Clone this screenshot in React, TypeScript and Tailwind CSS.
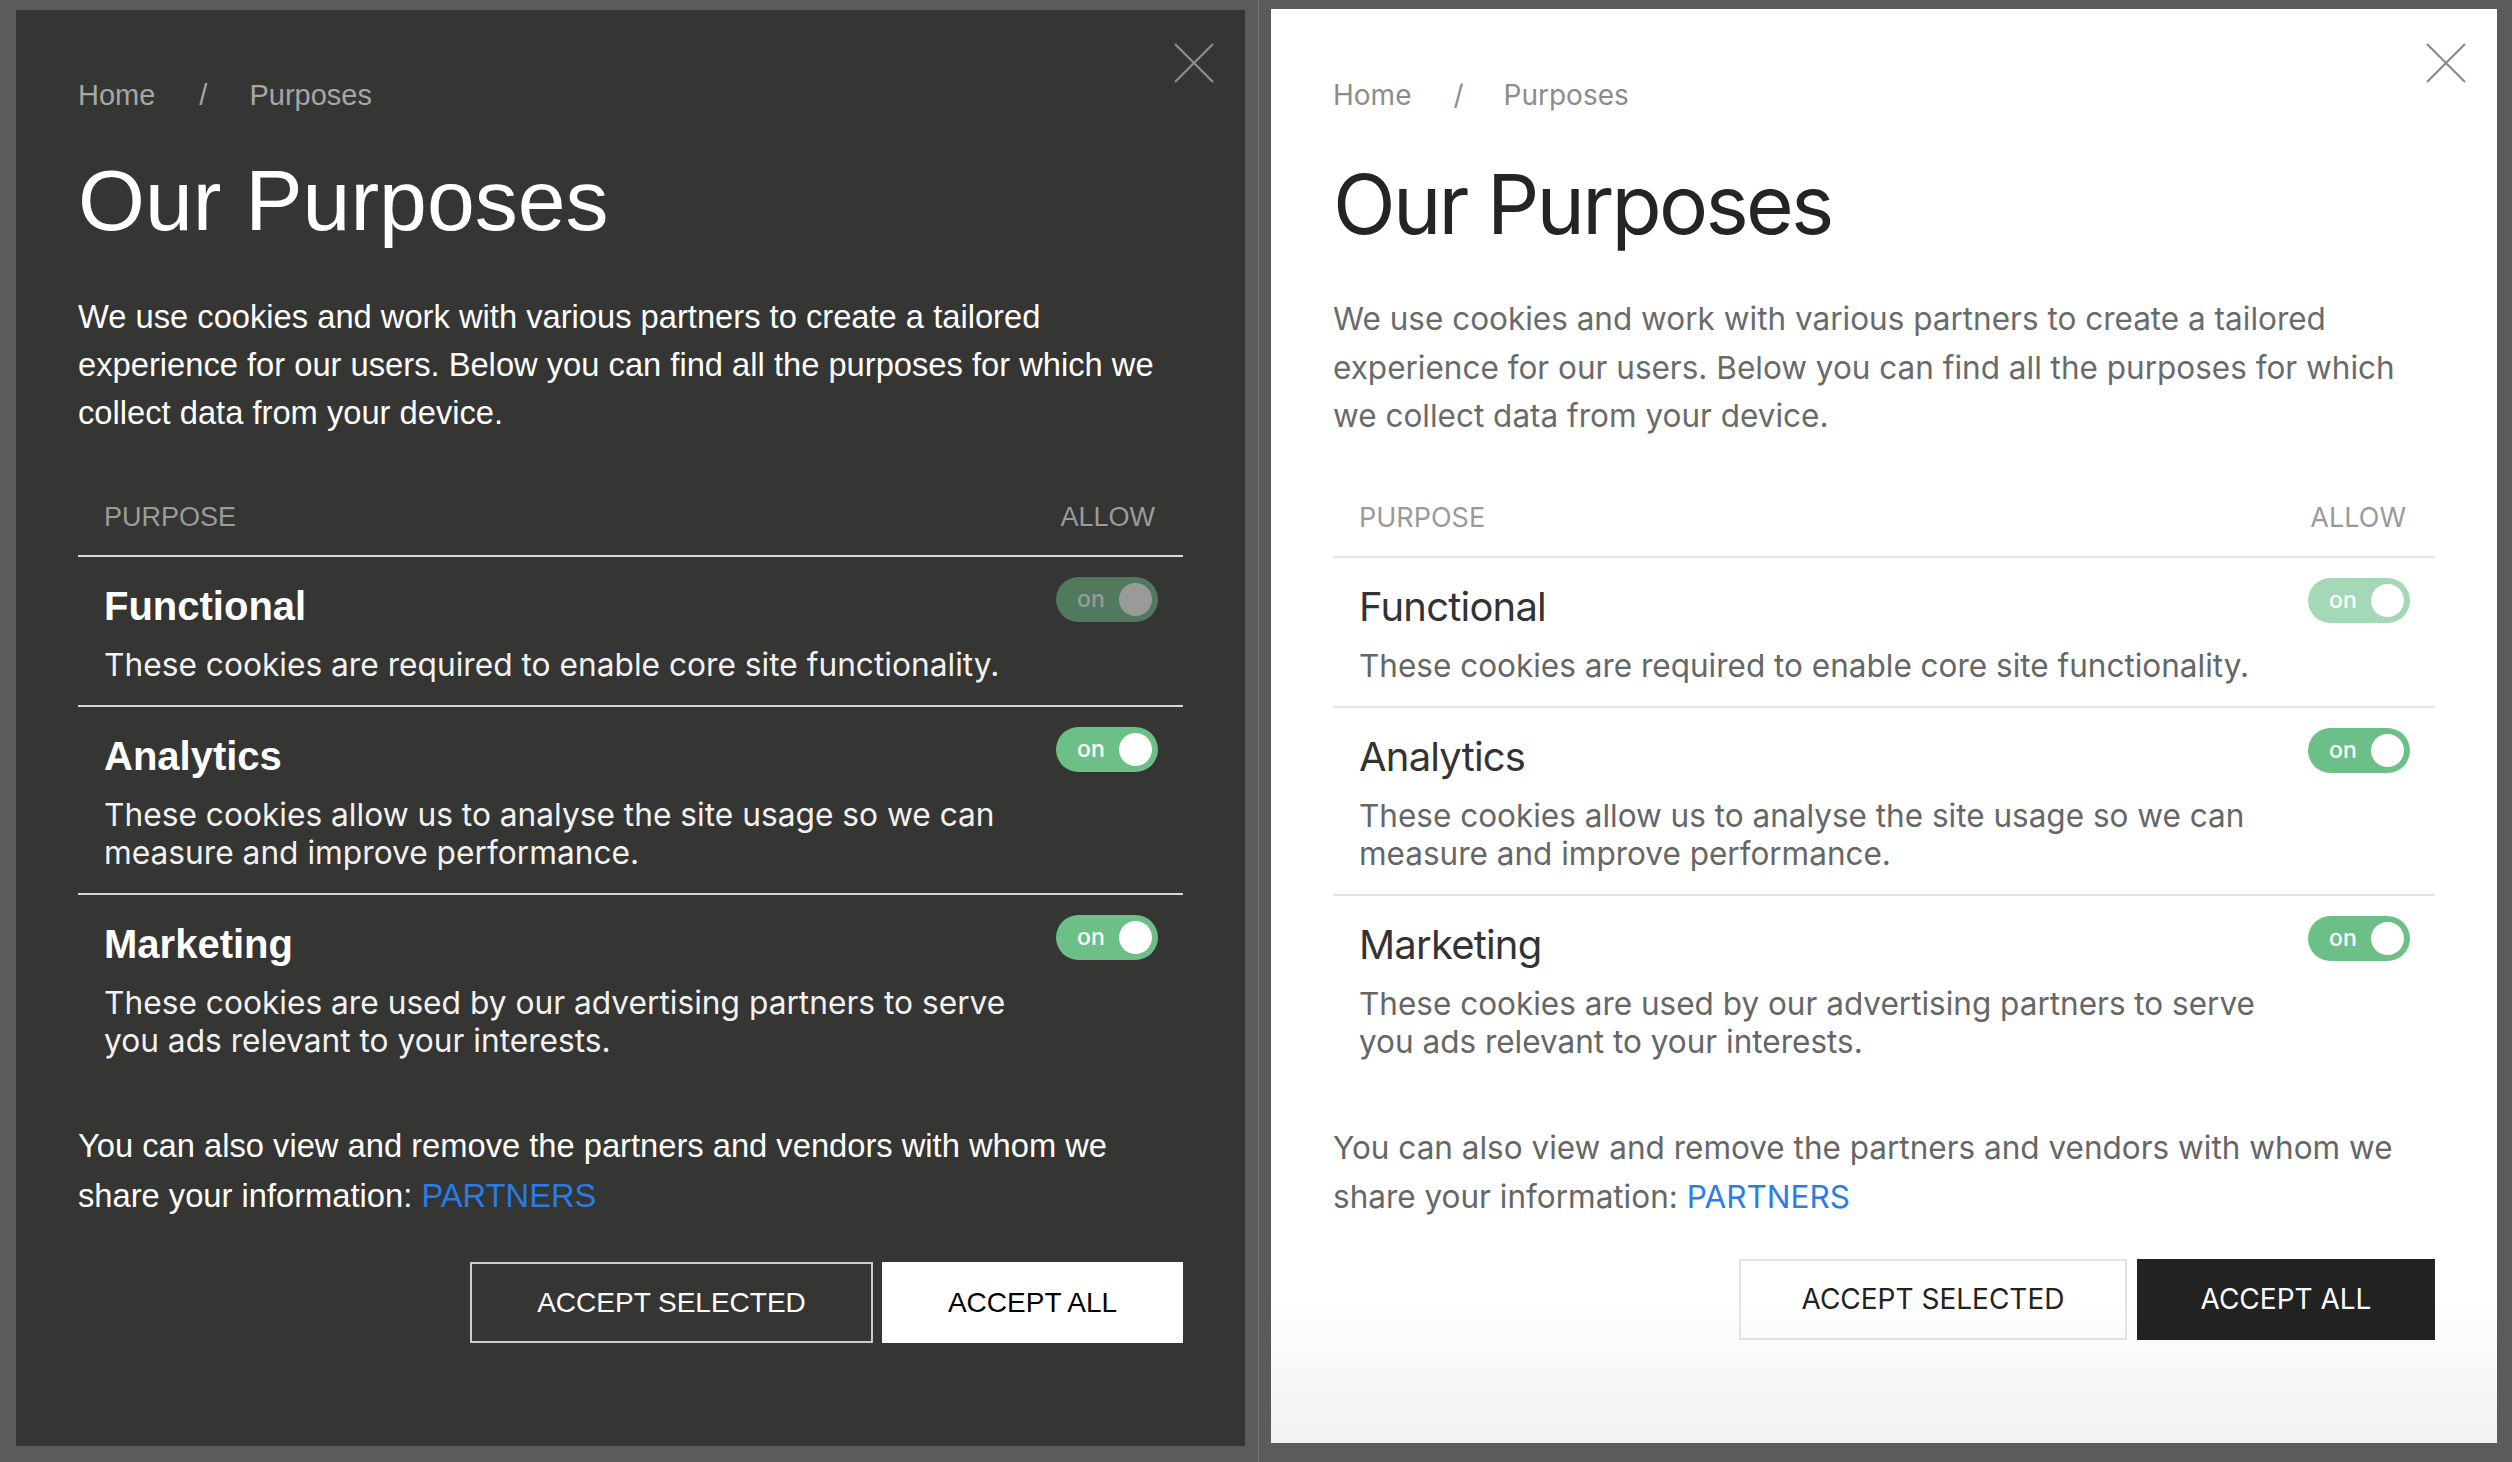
import React from "react";

type Purpose = {
  title: string;
  text: string;
  locked?: boolean;
};

const purposes: Purpose[] = [
  {
    title: "Functional",
    text: "These cookies are required to enable core site functionality.",
    locked: true,
  },
  {
    title: "Analytics",
    text: "These cookies allow us to analyse the site usage so we can measure and improve performance.",
  },
  {
    title: "Marketing",
    text: "These cookies are used by our advertising partners to serve you ads relevant to your interests.",
  },
];

const CloseIcon: React.FC<{ className: string }> = ({ className }) => (
  <svg className={className} width="40" height="40" viewBox="0 0 40 40" fill="none">
    <path d="M1 1L39 39M39 1L1 39" stroke="currentColor" strokeWidth="2.2" />
  </svg>
);

const Toggle: React.FC<{ dimClass: string }> = ({ dimClass }) => (
  <div
    className={`flex h-[45px] w-[102px] shrink-0 items-center justify-between rounded-full bg-[#6bbf87] pl-[21px] pr-[6px] ${dimClass}`}
  >
    <span className="font-['Inter',sans-serif] text-[23px] font-medium leading-none text-white">on</span>
    <span className="h-[33px] w-[33px] rounded-full bg-white" />
  </div>
);

const DarkPanel: React.FC = () => {
  return (
    <div className="relative h-[1436px] w-[1229px] shrink-0 bg-[#353533] px-[62px] pt-[65px] font-['Liberation_Sans',Arial,sans-serif]">
      <CloseIcon className="absolute right-[31px] top-[33px] text-[#8d8d8d]" />

      <nav className="flex items-center text-[29px] leading-[40px] text-[#a6a6a6]">
        <span>Home</span>
        <span className="ml-[44px] mr-[42px]">/</span>
        <span>Purposes</span>
      </nav>

      <h1 className="mt-[34px] text-[86px] leading-[103px] text-white">Our Purposes</h1>

      <p className="mt-[41px] text-[32.7px] leading-[48px] text-white">
        We use cookies and work with various partners to create a tailored experience for our users. Below you can
        find all the purposes for which we collect data from your device.
      </p>

      <div className="mt-[60px] flex justify-between border-b-2 border-[#dadada] pb-[18px] pl-[26px] pr-[28px] text-[27px] leading-[40px] text-[#9b9b9b]">
        <span>PURPOSE</span>
        <span>ALLOW</span>
      </div>

      {purposes.map((p, i) => (
        <div
          key={p.title}
          className={`flex items-start pb-[21px] pl-[26px] pr-[25px] pt-[20px] ${
            i < purposes.length - 1 ? "border-b-2 border-[#d6d6d6]" : ""
          }`}
        >
          <div className="flex-1 pr-[22px]">
            <h3 className="mt-[5px] text-[40px] font-bold leading-[48px] text-white">{p.title}</h3>
            <p className="mt-[16px] font-['Inter',sans-serif] text-[31.7px] leading-[38px] text-[#f2f2f2]">
              {p.text}
            </p>
          </div>
          <Toggle dimClass={p.locked ? "opacity-50" : ""} />
        </div>
      ))}

      <p className="mt-[40px] text-[32.7px] leading-[50px] text-white">
        You can also view and remove the partners and vendors with whom we share your information:{" "}
        <a className="text-[#2a7be4]">PARTNERS</a>
      </p>

      <div className="mt-[41px] flex justify-end gap-[9px] text-[28px]">
        <button className="h-[81px] w-[403px] border-2 border-[#cdcdcd] text-white">ACCEPT SELECTED</button>
        <button className="h-[81px] w-[301px] bg-white text-black">ACCEPT ALL</button>
      </div>
    </div>
  );
};

const LightPanel: React.FC = () => {
  return (
    <div className="relative -mt-[1px] h-[1434px] w-[1226px] shrink-0 bg-linear-to-b from-white from-90% to-[#f1f1f1] px-[62px] pt-[66px] font-['Inter',sans-serif]">
      <CloseIcon className="absolute right-[31px] top-[34px] text-[#8a8a8a]" />

      <nav className="flex items-center text-[28px] leading-[40px] text-[#8c8c8c]">
        <span>Home</span>
        <span className="ml-[42px] mr-[40px]">/</span>
        <span>Purposes</span>
      </nav>

      <h1 className="mt-[40px] text-[82px] leading-[100px] tracking-[-0.034em] text-[#242424]">Our Purposes</h1>

      <p className="mt-[40px] text-[31.5px] leading-[48.5px] text-[#6a6a6a]">
        We use cookies and work with various partners to create a tailored experience for our users. Below you can
        find all the purposes for which we collect data from your device.
      </p>

      <div className="mt-[57px] flex justify-between border-b-2 border-[#e4e4e4] pb-[18px] pl-[26px] pr-[29px] text-[27px] leading-[40px] text-[#9a9a9a]">
        <span>PURPOSE</span>
        <span>ALLOW</span>
      </div>

      {purposes.map((p, i) => (
        <div
          key={p.title}
          className={`flex items-start pb-[21px] pl-[26px] pr-[25px] pt-[20px] ${
            i < purposes.length - 1 ? "border-b-2 border-[#e4e4e4]" : ""
          }`}
        >
          <div className="flex-1 pr-[22px]">
            <h3 className="mt-[5px] text-[40px] leading-[48px] tracking-[-0.02em] text-[#333333]">{p.title}</h3>
            <p className="mt-[16px] text-[31.5px] leading-[38px] text-[#666666]">{p.text}</p>
          </div>
          <Toggle dimClass={p.locked ? "opacity-60" : ""} />
        </div>
      ))}

      <p className="mt-[41px] text-[31.5px] leading-[49px] text-[#666666]">
        You can also view and remove the partners and vendors with whom we share your information:{" "}
        <a className="text-[#2b7de6]">PARTNERS</a>
      </p>

      <div className="mt-[38px] flex justify-end gap-[10px] text-[28px]">
        <button className="h-[81px] w-[388px] border-2 border-[#e3e3e3] text-[#222222]">ACCEPT SELECTED</button>
        <button className="h-[81px] w-[298px] bg-[#222222] text-white">ACCEPT ALL</button>
      </div>
    </div>
  );
};

export default function App() {
  return (
    <div className="flex h-[1462px] w-[2512px] overflow-hidden bg-[#5b5b5b] pl-[16px] pt-[10px]">
      <DarkPanel />
      <div className="-mt-[10px] flex w-[26px] shrink-0 justify-center">
        <div className="h-full w-px bg-[#767676]" />
      </div>
      <LightPanel />
    </div>
  );
}
